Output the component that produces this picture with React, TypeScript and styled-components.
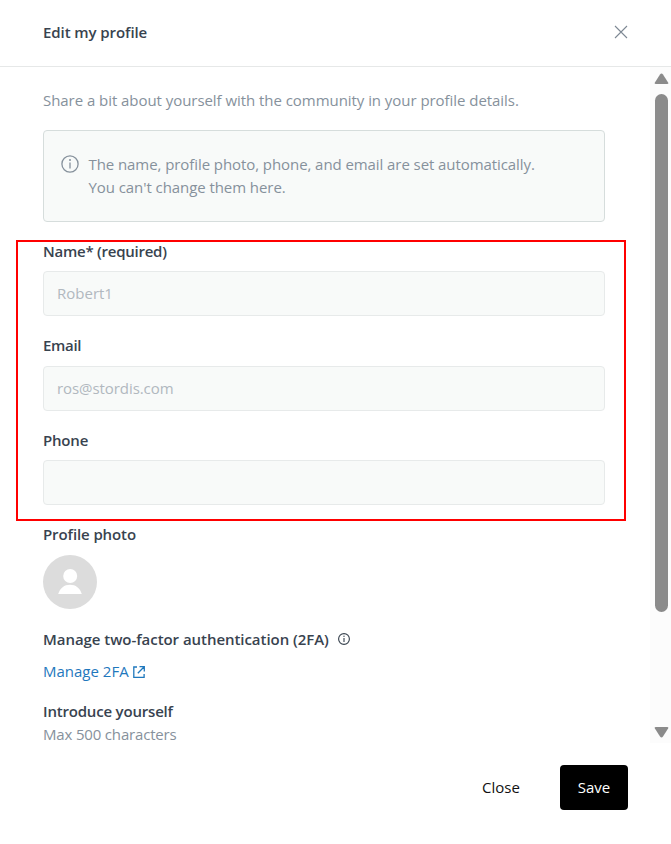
import React from 'react';
import styled, { createGlobalStyle } from 'styled-components';

const GlobalStyle = createGlobalStyle`
  *, *::before, *::after { box-sizing: border-box; }
  body { margin: 0; background: #fff; }
  button, input { font: inherit; }
`;

const Dialog = styled.div`
  display: flex;
  flex-direction: column;
  width: 671px;
  height: 844px;
  overflow: hidden;
  background: #fff;
  color: #38434f;
  font-family: 'Open Sans', 'Noto Sans', sans-serif;
  font-size: 15px;
  line-height: 23px;
`;

const Header = styled.header`
  display: flex;
  flex: none;
  align-items: center;
  justify-content: space-between;
  height: 67px;
  padding: 0 43px 2px;
  border-bottom: 1px solid #e6e8e8;
`;

const Text = styled.span<{ $track?: number }>`
  letter-spacing: ${(p) => p.$track ?? 0}px;
  white-space: nowrap;
`;

const Heading = styled(Text)`
  font-weight: 600;
`;

const IconButton = styled.button`
  display: flex;
  padding: 0;
  border: 0;
  background: none;
  color: #7d8894;
`;

const Body = styled.div`
  display: flex;
  flex: none;
  height: 676px;
  overflow: hidden;
`;

const Content = styled.main`
  display: flex;
  flex: 1;
  flex-direction: column;
  min-width: 0;
  padding: 22px 45px 0 43px;
`;

const Muted = styled(Text)`
  color: #86919c;
`;

const Notice = styled.section`
  display: flex;
  flex: none;
  gap: 9.5px;
  height: 92px;
  margin-top: 18px;
  padding: 22px 17px;
  border: 1px solid #d6dddc;
  border-radius: 4px;
  background: #f8faf9;
  color: #86919c;
  svg { flex: none; margin-top: 2px; }
`;

const NoticeLines = styled.div`
  display: flex;
  flex-direction: column;
`;

const Highlighted = styled.section`
  display: flex;
  flex: none;
  flex-direction: column;
  gap: 18px;
  height: 281px;
  margin: 18px -21px 0 -27px;
  padding: 0 19px 0 25px;
  border: 2px solid #f00;
`;

const Field = styled.label<{ $gap: number }>`
  display: flex;
  flex-direction: column;
  gap: ${(p) => p.$gap}px;
  &:first-child { margin-top: -2px; }
`;

const Input = styled.input<{ $track?: number }>`
  width: 100%;
  height: 45px;
  padding: 0 13px 2px;
  border: 1px solid #e7eaea;
  border-radius: 4px;
  background: #f8faf9;
  color: #b1b8bf;
  letter-spacing: ${(p) => p.$track ?? 0}px;
  &:disabled { opacity: 1; }
`;

const Section = styled.section<{ $top: number; $gap: number }>`
  display: flex;
  flex: none;
  flex-direction: column;
  align-items: flex-start;
  gap: ${(p) => p.$gap}px;
  margin-top: ${(p) => p.$top}px;
`;

const Inline = styled.div<{ $gap: number }>`
  display: flex;
  align-items: center;
  gap: ${(p) => p.$gap}px;
  svg { margin-bottom: 2px; }
`;

const Link = styled.a`
  display: flex;
  align-items: center;
  gap: 4px;
  color: #1f78bd;
  text-decoration: none;
`;

const ScrollTrack = styled.div`
  display: flex;
  flex: none;
  flex-direction: column;
  align-items: center;
  width: 21px;
  padding: 6px 0 5px 2px;
  background: #fcfcfc;
  color: #8b8b8b;
`;

const ScrollThumb = styled.div`
  width: 13px;
  height: 518px;
  margin: 9px 0 auto;
  border-radius: 7px;
  background: #8b8b8b;
`;

const Footer = styled.footer`
  display: flex;
  justify-content: flex-end;
  gap: 18px;
  padding: 22px 43px 0 0;
`;

const Button = styled.button<{ $primary?: boolean }>`
  width: ${(p) => (p.$primary ? 68 : 82)}px;
  height: 45px;
  padding: 0;
  border: 0;
  border-radius: 4px;
  background: ${(p) => (p.$primary ? '#000' : 'transparent')};
  color: ${(p) => (p.$primary ? '#fff' : '#111')};
`;

const InfoIcon = ({ size, stroke }: { size: number; stroke: number }) => (
  <svg width={size} height={size} viewBox="0 0 18 18" fill="none" stroke="currentColor" strokeWidth={stroke}>
    <circle cx="9" cy="9" r="8.1" />
    <path d="M9 7.5v6" />
    <circle cx="9" cy="4.9" r="1" fill="currentColor" stroke="none" />
  </svg>
);

const Arrow = ({ down }: { down?: boolean }) => (
  <svg width="15" height="12" viewBox="0 0 15 12" fill="currentColor">
    <path
      d={
        down
          ? 'M1.8 1h11.4q1.7 0 .9 1.5L9 10.6q-1.5 1.9-3 0L.9 2.5Q.1 1 1.8 1z'
          : 'M1.8 11h11.4q1.7 0 .9-1.5L9 1.4q-1.5-1.9-3 0L.9 9.5Q.1 11 1.8 11z'
      }
    />
  </svg>
);

const Avatar = () => (
  <svg width="54" height="54" viewBox="0 0 54 54">
    <circle cx="27" cy="27" r="27" fill="#dcdcdc" />
    <circle cx="27.2" cy="21" r="7" fill="#fff" />
    <path d="M15.2 39C17 33 21.3 29.7 27 29.7S37 33 38.8 39z" fill="#fff" />
  </svg>
);

const fields = [
  { label: 'Name* (required)', value: 'Robert1', labelTrack: -0.25, track: 0, gap: 8 },
  { label: 'Email', value: 'ros@stordis.com', labelTrack: -0.3, track: -0.07, gap: 9 },
  { label: 'Phone', value: '', labelTrack: -0.2, track: 0, gap: 8 },
];

export default function App() {
  return (
    <Dialog>
      <GlobalStyle />
      <Header>
        <Heading $track={-0.08}>Edit my profile</Heading>
        <IconButton aria-label="Close dialog">
          <svg width="14" height="14" viewBox="0 0 14 14" stroke="currentColor" strokeWidth="1.1">
            <path d="M1 1l12 12M13 1L1 13" />
          </svg>
        </IconButton>
      </Header>
      <Body>
        <Content>
          <Muted $track={-0.05}>Share a bit about yourself with the community in your profile details.</Muted>
          <Notice>
            <InfoIcon size={18} stroke={1.3} />
            <NoticeLines>
              <Text $track={-0.075}>The name, profile photo, phone, and email are set automatically.</Text>
              <Text $track={-0.07}>You can't change them here.</Text>
            </NoticeLines>
          </Notice>
          <Highlighted>
            {fields.map((f) => (
              <Field key={f.label} $gap={f.gap}>
                <Heading $track={f.labelTrack}>{f.label}</Heading>
                <Input disabled defaultValue={f.value} $track={f.track} />
              </Field>
            ))}
          </Highlighted>
          <Section $top={2} $gap={9}>
            <Heading $track={-0.1}>Profile photo</Heading>
            <Avatar />
          </Section>
          <Section $top={19} $gap={9}>
            <Inline $gap={9}>
              <Heading $track={-0.05}>Manage two-factor authentication (2FA)</Heading>
              <InfoIcon size={12} stroke={1.7} />
            </Inline>
            <Link href="#">
              <Text>Manage 2FA</Text>
              <svg width="12" height="12" viewBox="0 0 12 12" fill="none" stroke="currentColor" strokeWidth="1.3">
                <path d="M4 1H.8v10.3h10.3V8M6.5.7h4.8v4.8M11.2.8L4.8 7.2" />
              </svg>
            </Link>
          </Section>
          <Section $top={17} $gap={0}>
            <Heading $track={-0.19}>Introduce yourself</Heading>
            <Muted $track={-0.17}>Max 500 characters</Muted>
          </Section>
        </Content>
        <ScrollTrack>
          <Arrow />
          <ScrollThumb />
          <Arrow down />
        </ScrollTrack>
      </Body>
      <Footer>
        <Button><Text>Close</Text></Button>
        <Button $primary><Text>Save</Text></Button>
      </Footer>
    </Dialog>
  );
}
